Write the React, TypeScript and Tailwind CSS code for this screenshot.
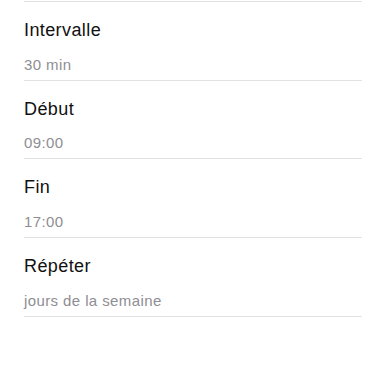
const items = [
  { title: "Intervalle", value: "30 min" },
  { title: "Début", value: "09:00" },
  { title: "Fin", value: "17:00" },
  { title: "Répéter", value: "jours de la semaine" },
];

export default function App() {
  return (
    <div
      className="h-[386px] w-[386px] bg-white px-6 pt-[1px]"
      style={{ fontFamily: '"Liberation Sans", Arial, sans-serif' }}
    >
      <div className="border-t border-[#e2e2e2]">
        {items.map((item) => (
          <div key={item.title} className="flex flex-col border-b border-[#e2e2e2] pt-[18px] pb-[7.2px]">
            <p className="text-[18px] leading-[20px] tracking-[0.4px] text-[#111]">{item.title}</p>
            <p className="mt-[16.5px] text-[15px] leading-[16px] tracking-[0.4px] text-[#8e8e93]">
              {item.value}
            </p>
          </div>
        ))}
      </div>
    </div>
  );
}
